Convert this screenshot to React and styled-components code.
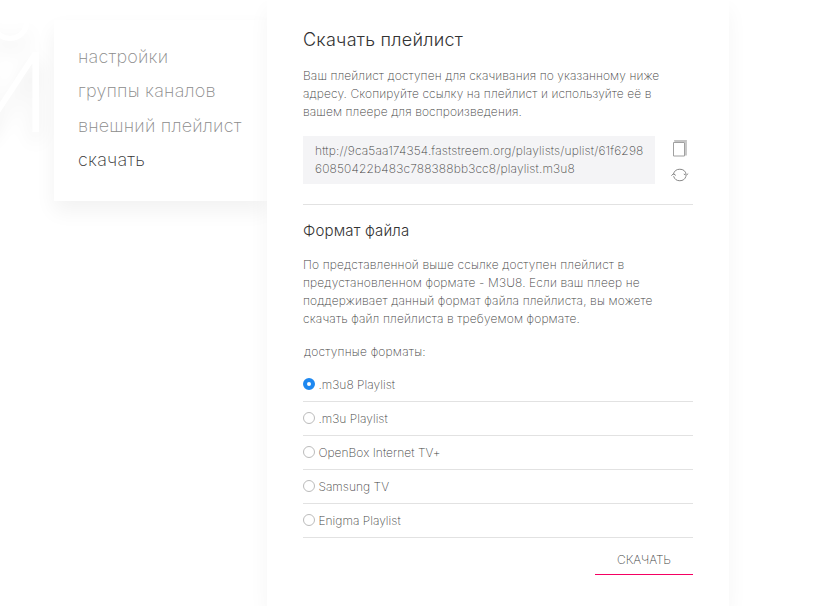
import React, { useState } from "react";
import styled, { createGlobalStyle } from "styled-components";

const MENU = ["настройки", "группы каналов", "внешний плейлист", "скачать"];

const FORMATS = [
    ".m3u8 Playlist",
    ".m3u Playlist",
    "OpenBox Internet TV+",
    "Samsung TV",
    "Enigma Playlist",
];

const CopyIcon = () => (
    <svg width="16" height="18" viewBox="0 0 16 18" fill="none">
        <path d="M3 1.8V1h11v13.5h-1.5" stroke="#c4c4c4" strokeWidth="1.8" />
        <path d="M1.5 2.5h11v13.5h-11z" stroke="#a0a0a0" />
    </svg>
);

const RefreshIcon = () => (
    <svg width="18" height="16" viewBox="0 0 18 16" fill="none" stroke="#888">
        <path d="M2.4 7.6A6.5 6.5 0 0 1 15.2 7.6" />
        <path d="M15 9.2A6.5 6.5 0 0 1 2.6 9.2" />
        <path d="M.4 8.6l2-1.8 2.4 1.6" />
        <path d="M17.2 6.6l-2 1.8-2.4-1.4" />
    </svg>
);

const App = () => {
    const [format, setFormat] = useState(FORMATS[0]);

    return (
        <Page>
            <GlobalStyle />
            <Backdrop aria-hidden="true">й</Backdrop>
            <Menu>
                {MENU.map((item) => (
                    <MenuLink key={item} href="#" $active={item === "скачать"}>
                        {item}
                    </MenuLink>
                ))}
            </Menu>
            <Panel>
                <Title>Скачать плейлист</Title>
                <Text $spacing={0.1}>
                    Ваш плейлист доступен для скачивания по указанному ниже
                    <br />
                    адресу. Скопируйте ссылку на плейлист и используйте её в
                    <br />
                    вашем плеере для воспроизведения.
                </Text>
                <LinkRow>
                    <LinkBox>
                        http://9ca5aa174354.faststreem.org/playlists/uplist/61f629860850422b483c788388bb3cc8/playlist.m3u8
                    </LinkBox>
                    <Actions>
                        <IconBtn aria-label="Скопировать">
                            <CopyIcon />
                        </IconBtn>
                        <IconBtn aria-label="Обновить">
                            <RefreshIcon />
                        </IconBtn>
                    </Actions>
                </LinkRow>
                <Subtitle>Формат файла</Subtitle>
                <Text $spacing={0.14}>
                    По представленной выше ссылке доступен плейлист в
                    <br />
                    предустановленном формате - M3U8. Если ваш плеер не
                    <br />
                    поддерживает данный формат файла плейлиста, вы можете
                    <br />
                    скачать файл плейлиста в требуемом формате.
                </Text>
                <Legend>доступные форматы:</Legend>
                {FORMATS.map((name) => (
                    <Option key={name}>
                        <Radio
                            type="radio"
                            name="format"
                            checked={format === name}
                            onChange={() => setFormat(name)}
                        />
                        {name}
                    </Option>
                ))}
                <DownloadBtn>СКАЧАТЬ</DownloadBtn>
            </Panel>
        </Page>
    );
};

export default App;

const GlobalStyle = createGlobalStyle`
    * {
        box-sizing: border-box;
    }
    body {
        margin: 0;
        background: #fff;
        font-family: Inter, sans-serif;
        font-weight: 200;
        color: #444;
    }
`;

const Page = styled.div`
    position: relative;
    display: flex;
    align-items: flex-start;
    height: 606px;
    padding-left: 54px;
    overflow: hidden;
`;

const Backdrop = styled.div`
    position: absolute;
    top: -1px;
    right: 773px;
    font-size: 146px;
    line-height: 160px;
    font-weight: 200;
    color: #fff;
    text-shadow: 0 10px 20px rgba(0, 0, 0, 0.09);
`;

const Menu = styled.nav`
    position: relative;
    display: flex;
    flex-direction: column;
    width: 213px;
    height: 181px;
    margin-top: 20px;
    padding: 20px 24px;
    background: #fff;
    box-shadow: 0 10px 20px rgba(0, 0, 0, 0.055);
`;

const MenuLink = styled.a`
    font-size: 18px;
    line-height: 34.4px;
    letter-spacing: 0.2px;
    white-space: nowrap;
    font-weight: 200;
    text-decoration: none;
    color: ${({ $active }) => ($active ? "#333" : "#8c8c8c")};
`;

const Panel = styled.main`
    position: relative;
    width: 462px;
    height: 606px;
    padding: 28px 36px 0;
    background: #fff;
    box-shadow: 0 10px 20px rgba(0, 0, 0, 0.045);
`;

const Title = styled.h1`
    margin: 0 0 15px;
    font-size: 18px;
    line-height: 24px;
    font-weight: 300;
    letter-spacing: 0.25px;
    color: #333;
`;

const Text = styled.p`
    margin: 0;
    font-size: 12px;
    line-height: 18px;
    letter-spacing: ${({ $spacing }) => $spacing}px;
    white-space: nowrap;
`;

const LinkRow = styled.div`
    display: flex;
    gap: 15px;
    padding: 15px 0 20px;
    border-bottom: 1px solid #e2e2e2;
`;

const LinkBox = styled.div`
    width: 352px;
    height: 48px;
    padding: 6px 10px 6px 12px;
    background: #f4f4f6;
    font-size: 12px;
    line-height: 18px;
    letter-spacing: 0.15px;
    word-break: break-all;
`;

const Actions = styled.div`
    display: flex;
    flex-direction: column;
    gap: 9px;
    padding-top: 4px;
`;

const IconBtn = styled.button`
    display: flex;
    justify-content: center;
    width: 20px;
    padding: 0;
    border: none;
    background: none;
    cursor: pointer;
`;

const Subtitle = styled.h2`
    margin: 16px 0 15px;
    font-size: 15px;
    line-height: 20px;
    font-weight: 300;
    letter-spacing: 0.16px;
    color: #333;
`;

const Legend = styled.div`
    padding: 15px 0 7px 1px;
    font-size: 12px;
    line-height: 18px;
    letter-spacing: 0.2px;
`;

const Option = styled.label`
    display: flex;
    align-items: center;
    height: 34px;
    border-bottom: 1px solid #e2e2e2;
    font-size: 12px;
    letter-spacing: 0.03px;
    cursor: pointer;
`;

const Radio = styled.input`
    appearance: none;
    width: 12px;
    height: 12px;
    margin: 0 3.4px 1px 0;
    border: 1px solid #bbb;
    border-radius: 50%;
    background: #fff;

    &:checked {
        border: 4px solid #1e88f0;
    }
`;

const DownloadBtn = styled.button`
    display: block;
    width: 98px;
    height: 30px;
    margin: 7px 0 0 auto;
    padding: 0;
    border: none;
    border-bottom: 1px solid #f50062;
    background: none;
    font-family: inherit;
    font-size: 12px;
    font-weight: 200;
    letter-spacing: -0.1px;
    color: #444;
    cursor: pointer;
`;
